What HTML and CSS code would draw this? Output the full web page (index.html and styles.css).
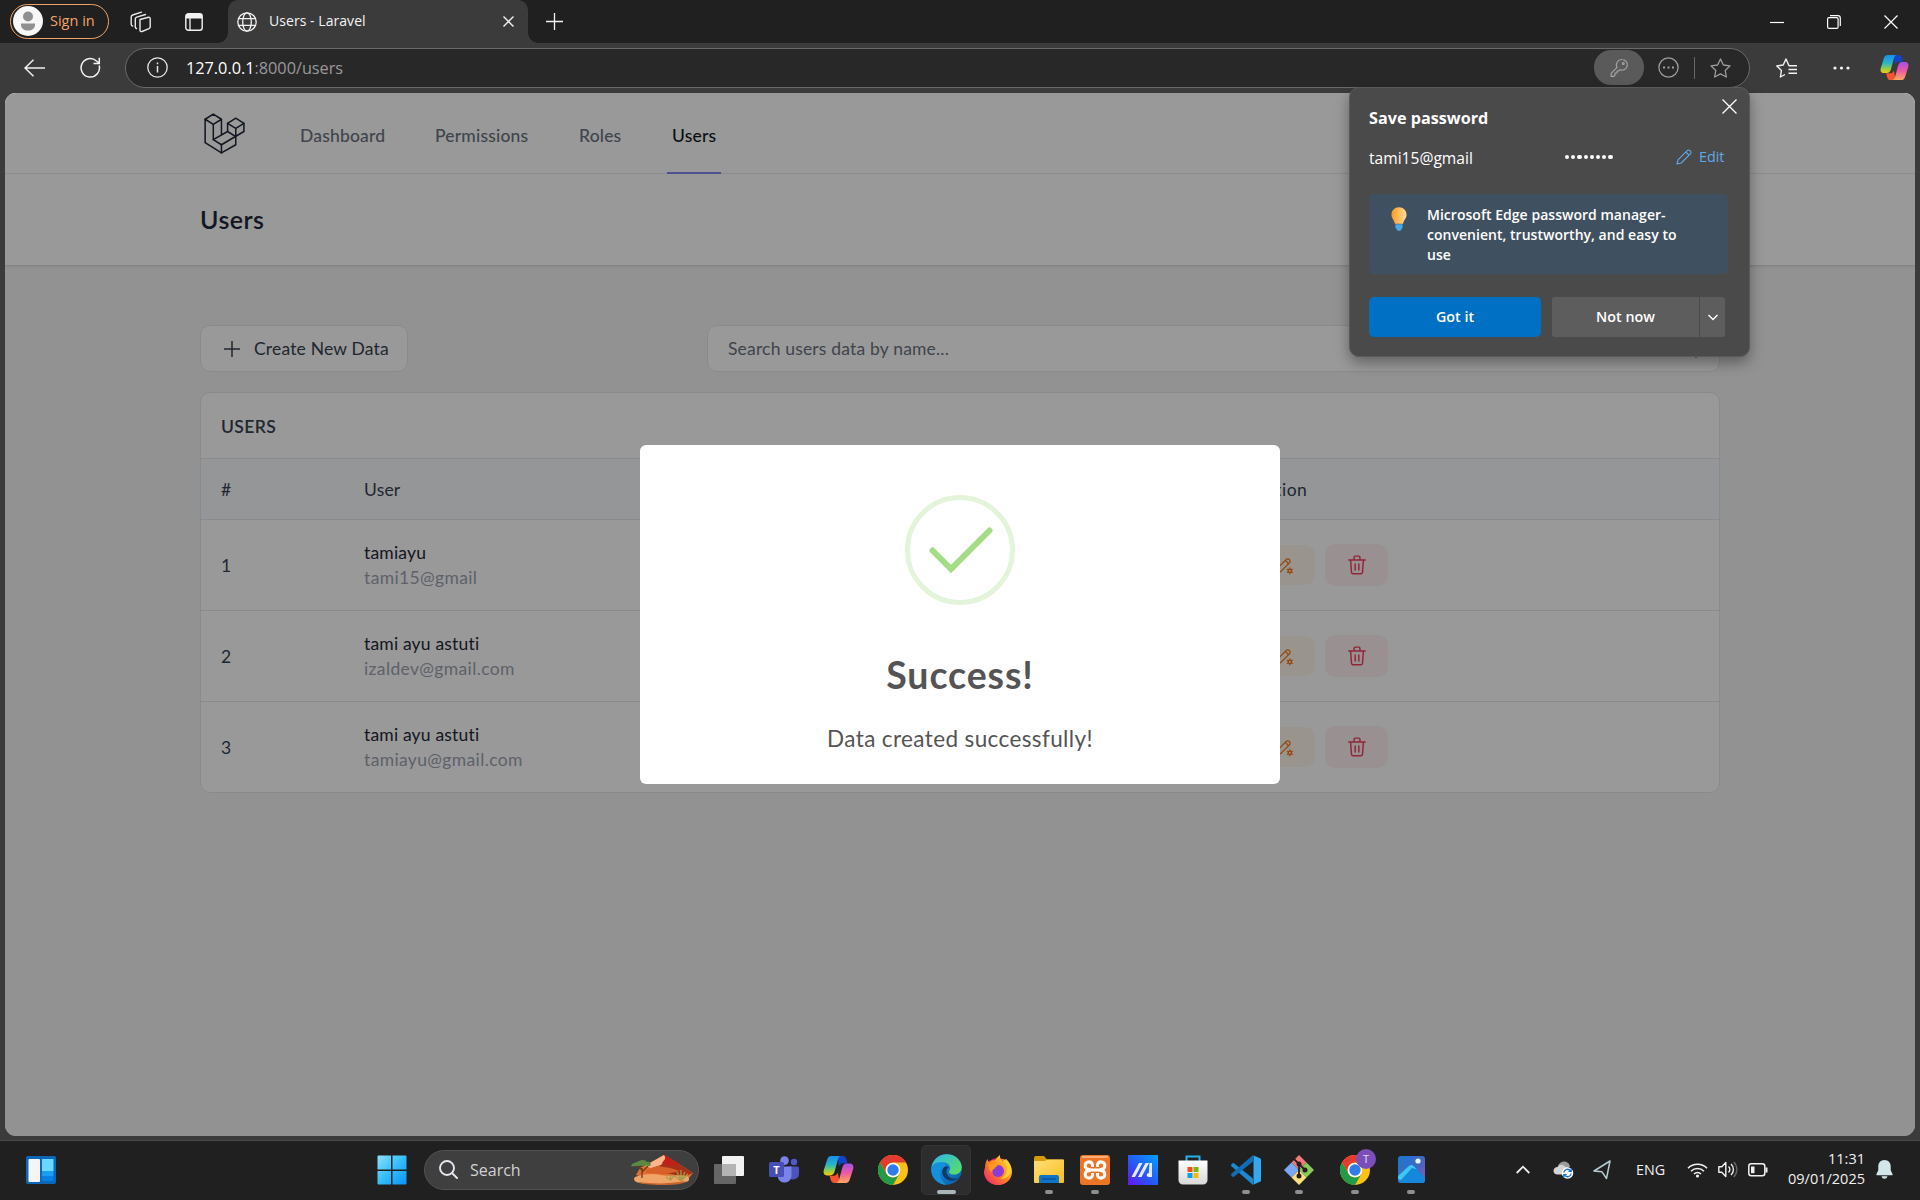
FILE: index.html
```html
<!DOCTYPE html>
<html lang="en">
<head>
<meta charset="utf-8">
<title>Users - Laravel</title>
<link rel="stylesheet" href="styles.css">
</head>
<body>
<svg class="defs" width="0" height="0" aria-hidden="true">
  <defs>
    <linearGradient id="cp1" x1="0" y1="0" x2="0" y2="1"><stop offset="0" stop-color="#1a8fe8"/><stop offset=".45" stop-color="#28b6c8"/><stop offset=".75" stop-color="#8fcf4a"/><stop offset="1" stop-color="#ffc800"/></linearGradient>
    <linearGradient id="cp2" x1="0" y1="0" x2="0" y2="1"><stop offset="0" stop-color="#a84fe8"/><stop offset=".5" stop-color="#ee5aa0"/><stop offset="1" stop-color="#ffa860"/></linearGradient>
    <linearGradient id="win" x1="0" y1="0" x2="1" y2="1"><stop offset="0" stop-color="#8be2ff"/><stop offset=".5" stop-color="#35bdfb"/><stop offset="1" stop-color="#0b92f8"/></linearGradient>
    <linearGradient id="edgeA" x1="0" y1="0" x2="1" y2="1"><stop offset="0" stop-color="#2cb6ea"/><stop offset="1" stop-color="#5fe05a"/></linearGradient>
    <linearGradient id="edgeB" x1="0" y1="0" x2="1" y2="1"><stop offset="0" stop-color="#1ba0e8"/><stop offset="1" stop-color="#0c59a4"/></linearGradient>
    <linearGradient id="ff" x1="1" y1="0" x2="0" y2="1"><stop offset="0" stop-color="#fff04a"/><stop offset=".5" stop-color="#ff8a1e"/><stop offset="1" stop-color="#f0147a"/></linearGradient>
    <linearGradient id="fold" x1="0" y1="0" x2="1" y2="1"><stop offset="0" stop-color="#ffe07a"/><stop offset="1" stop-color="#fbbc1d"/></linearGradient>
    <linearGradient id="asus" x1="1" y1="0" x2="0" y2="1"><stop offset="0" stop-color="#00a2ff"/><stop offset=".6" stop-color="#2c50f5"/><stop offset="1" stop-color="#6a12f4"/></linearGradient>
    <linearGradient id="photo" x1="0" y1="0" x2="1" y2="1"><stop offset="0" stop-color="#1479d6"/><stop offset=".6" stop-color="#4a64c0"/><stop offset="1" stop-color="#9a5aae"/></linearGradient>
    <linearGradient id="bulb" x1="0" y1="0" x2="1" y2="0"><stop offset="0" stop-color="#ff9a1a"/><stop offset="1" stop-color="#ffe0a0"/></linearGradient>
    <linearGradient id="bag" x1="0" y1="0" x2="0" y2="1"><stop offset="0" stop-color="#fff"/><stop offset="1" stop-color="#d8d8d8"/></linearGradient>
    <symbol id="copilot" viewBox="0 0 30 28">
      <path d="M12 1h7c2 0 3 1 3.600 3l1 4h-4c-2 0-3.300 1-4 3l-1-6z" fill="#1642c8"/>
      <path d="M18 27h-7c-2 0-3-1-3.600-3l-1-4h4c2 0 3.300-1 4-3l1 6z" fill="#f4552e"/>
      <path d="M8 1h9c-1.500.6-2.200 2-2.700 3.800l-3 11c-.7 2.500-2 4-4.300 4H4C1.200 19.800 0 17.500.8 14.500L4 4.500C4.800 2 6 1 8 1z" fill="url(#cp1)"/>
      <path d="M22 27h-9c1.500-.6 2.200-2 2.700-3.800l3-11c.7-2.500 2-4 4.300-4h3c2.800 0 4 2.300 3.200 5.300L26 23.500C25.200 26 24 27 22 27z" fill="url(#cp2)"/>
    </symbol>
    <symbol id="chrome" viewBox="0 0 30 30">
      <circle cx="15" cy="15" r="15" fill="#fbc116"/>
      <path d="M2 7.500A15 15 0 0 1 28 7.500H15a7.500 7.500 0 0 0-6.500 11.200z" fill="#e33b2e"/>
      <path d="M2 7.500A15 15 0 0 0 15 30l6.500-11.200a7.500 7.500 0 0 1-13 0z" fill="#229a48"/>
      <circle cx="15" cy="15" r="7.300" fill="#fff"/><circle cx="15" cy="15" r="5.700" fill="#2f7bea"/>
    </symbol>
    <symbol id="pencog" viewBox="0 0 24 24">
      <g fill="none" stroke="currentColor" stroke-width="1.500" stroke-linecap="round" stroke-linejoin="round"><path d="M4 20h4L18.500 9.500a2.828 2.828 0 1 0-4-4L4 16v4M13.500 6.500l4 4"/><circle cx="19" cy="19" r="2"/><path d="M19 15.500V17M19 21v1.500M22 17.200l-1.300.8M17.300 20l-1.300.8M16 17.200l1.300.8M20.700 20l1.300.8"/></g>
    </symbol>
    <symbol id="trash" viewBox="0 0 24 24">
      <g fill="none" stroke="currentColor" stroke-width="1.600" stroke-linecap="round" stroke-linejoin="round"><path d="M3 6.500h18M5 6.500l1 13.500a1.500 1.500 0 0 0 1.500 1.500h9A1.500 1.500 0 0 0 18 20l1-13.500M8.800 6V3.500A1.200 1.200 0 0 1 10 2.300h4a1.200 1.200 0 0 1 1.200 1.200V6M10 11v6.500M14 11v6.500"/></g>
    </symbol>
  </defs>
</svg>

<div class="browser">
  <header class="titlebar">
    <div class="signin"><svg width="30" height="30" viewBox="0 0 30 30"><circle cx="15" cy="15" r="15" fill="#f7f7f7"/><circle cx="15" cy="10.500" r="5" fill="#909090"/><path d="M8 17.500h14v1.500c0 3.500-3 5.500-7 5.500s-7-2-7-5.500z" fill="#909090"/></svg><span>Sign in</span></div>
    <svg class="ico-spaces" width="22" height="22" viewBox="0 0 22 22" fill="none" stroke="#e8e8e8" stroke-width="1.400" stroke-linejoin="round" stroke-linecap="round"><path d="M10 8.500l8.500-2.200c1-.2 1.700.3 1.700 1.200v8.500c0 .8-.4 1.300-1.200 1.700L12 20.500c-1 .3-2-.2-2-1.200z"/><path d="M6.500 17.500C5.700 17.300 5.300 16.700 5.300 16V8c0-1 .5-1.600 1.400-1.900L15.500 3.500"/><path d="M2.600 15C1.700 14.700 1.200 14 1.200 13.200V6c0-1 .5-1.700 1.400-2L11.500 1.200"/></svg>
    <svg class="ico-tabs" width="18" height="18" viewBox="0 0 18 18"><rect x=".8" y=".8" width="16.400" height="16.400" rx="2.500" fill="none" stroke="#f2f2f2" stroke-width="1.400"/><path d="M1 1h16v4.500H1z" fill="#f2f2f2"/><path d="M5 5v12" stroke="#f2f2f2" stroke-width="1.300"/></svg>
    <div class="tab">
      <svg width="20" height="20" viewBox="0 0 20 20" fill="none" stroke="#f2f2f2" stroke-width="1.300"><circle cx="10" cy="10" r="9.200"/><ellipse cx="10" cy="10" rx="4.300" ry="9.200"/><path d="M1.600 6.700h16.800M1.600 13.300h16.800"/></svg>
      <span class="tab-title">Users - Laravel</span>
      <svg width="11" height="11" viewBox="0 0 11 11" stroke="#f2f2f2" stroke-width="1.400"><path d="M.5.5l10 10M10.500.5l-10 10"/></svg>
    </div>
    <svg class="ico-newtab" width="17" height="17" viewBox="0 0 17 17" stroke="#f2f2f2" stroke-width="1.300"><path d="M8.500 0v17M0 8.500h17"/></svg>
    <div class="winctl">
      <svg width="14" height="14" viewBox="0 0 14 14" stroke="#fff" stroke-width="1.200"><path d="M0 7.500h14"/></svg>
      <svg width="14" height="14" viewBox="0 0 14 14" fill="none" stroke="#fff" stroke-width="1.200"><rect x=".6" y="2.600" width="10.500" height="10.800" rx="1.500"/><path d="M3 .7h8c1.300 0 2.300 1 2.300 2.300V11"/></svg>
      <svg width="14" height="14" viewBox="0 0 14 14" stroke="#fff" stroke-width="1.200"><path d="M.5.5l13 13M13.500.5l-13 13"/></svg>
    </div>
  </header>

  <div class="toolbar">
    <svg class="ico-back" width="21" height="18" viewBox="0 0 21 18" fill="none" stroke="#f2f2f2" stroke-width="1.500"><path d="M21 9H1M9.500.8L1 9l8.500 8.200"/></svg>
    <svg class="ico-reload" width="21" height="21" viewBox="0 0 21 21" fill="none" stroke="#f2f2f2" stroke-width="1.500"><path d="M19.200 8.500A9.200 9.200 0 1 1 16.500 4l2.500 2M19.300.8v5.700h-5.800"/></svg>
    <div class="address">
      <svg width="21" height="21" viewBox="0 0 21 21" fill="none" stroke="#e8e8e8" stroke-width="1.300"><circle cx="10.500" cy="10.500" r="9.700"/><path d="M10.500 9v6.500M10.500 5.500v1.700" stroke-width="1.500"/></svg>
      <span class="url"><b>127.0.0.1</b>:8000/users</span>
      <span class="keypill"><svg width="20" height="20" viewBox="0 0 20 20" fill="none" stroke="#a4a4a4" stroke-width="1.200" stroke-linejoin="round"><path d="M13 1.500a5.300 5.300 0 1 1-2 10.200L9.700 13H8v2H6v2l-1.300 1.400H2.200v-3l5.900-6A5.300 5.300 0 0 1 13 1.500z"/><circle cx="14.300" cy="5.600" r=".9"/></svg></span>
      <svg class="ico-more" width="21" height="21" viewBox="0 0 21 21" fill="none" stroke="#9d9d9d" stroke-width="1.300"><circle cx="10.500" cy="10.500" r="9.600"/><path d="M5 10.500h2M9.500 10.500h2M14 10.500h2" stroke-width="2"/></svg>
      <i class="sep"></i>
      <svg width="21" height="20" viewBox="0 0 21 20" fill="none" stroke="#9d9d9d" stroke-width="1.300" stroke-linejoin="round"><path d="M10.500 1l2.900 6 6.600.9-4.800 4.600 1.200 6.500-5.900-3.100L4.600 19l1.200-6.500L1 7.900 7.600 7z"/></svg>
    </div>
    <svg class="ico-fav" width="21" height="20" viewBox="0 0 21 20" fill="none" stroke="#f2f2f2" stroke-width="1.400" stroke-linejoin="round"><path d="M21 7.700h-8L10 1 7.200 7 .8 7.900l4.600 4.600-1 6.500L9 16.500M12.500 11.500H21M12.500 15.300H21"/></svg>
    <svg class="ico-dots" width="17" height="4" viewBox="0 0 17 4" fill="#f2f2f2"><circle cx="2" cy="2" r="1.600"/><circle cx="8.500" cy="2" r="1.600"/><circle cx="15" cy="2" r="1.600"/></svg>
    <svg class="ico-cp" width="29" height="29"><use href="#copilot"/></svg>
  </div>

  <div class="viewport">
    <nav class="nav">
      <svg class="logo" width="49" height="49" viewBox="0 0 24 24" fill="none" stroke="#1f2937" stroke-width=".75" stroke-linejoin="round" stroke-linecap="round"><path d="M3 17l8 5 7-4v-8l-4-2.500L18 5l4 2.500v4L11 18l-4-2.500V8L3 5.500z"/><path d="M11 18v4M7 15.500l7-4M14 7.500v4M14 11.500l4 2.500M11 13V5.500L7 3 3 5.500M7 8l4-2.500M18 10l4-2.500"/></svg>
      <a class="n1">Dashboard</a><a class="n2">Permissions</a><a class="n3">Roles</a><a class="n4 active">Users</a>
    </nav>
    <div class="pagehead"><h2>Users</h2></div>
    <main>
      <div class="actions">
        <div class="create"><svg width="16" height="16" viewBox="0 0 16 16" stroke="#374151" stroke-width="1.500"><path d="M8 0v16M0 8h16"/></svg><span>Create New Data</span></div>
        <div class="search"><span>Search users data by name...</span><svg width="18" height="18" viewBox="0 0 18 18" fill="none" stroke="#374151" stroke-width="1.500" stroke-linecap="round"><circle cx="7.500" cy="7.500" r="6.500"/><path d="M12.500 12.500L17 17"/></svg></div>
      </div>
      <section class="card">
        <h3>USERS</h3>
        <div class="row head"><span>#</span><span>User</span><span class="act">Action</span></div>
        <div class="row"><span class="num">1</span><div class="who"><p>tamiayu</p><p class="mail">tami15@gmail</p></div><div class="btns"><i class="edit"><svg width="20" height="20"><use href="#pencog"/></svg></i><i class="del"><svg width="22" height="22"><use href="#trash"/></svg></i></div></div>
        <div class="row"><span class="num">2</span><div class="who"><p>tami ayu astuti</p><p class="mail">izaldev@gmail.com</p></div><div class="btns"><i class="edit"><svg width="20" height="20"><use href="#pencog"/></svg></i><i class="del"><svg width="22" height="22"><use href="#trash"/></svg></i></div></div>
        <div class="row"><span class="num">3</span><div class="who"><p>tami ayu astuti</p><p class="mail">tamiayu@gmail.com</p></div><div class="btns"><i class="edit"><svg width="20" height="20"><use href="#pencog"/></svg></i><i class="del"><svg width="22" height="22"><use href="#trash"/></svg></i></div></div>
      </section>
    </main>
    <div class="overlay">
      <div class="modal">
        <svg width="110" height="110" viewBox="0 0 110 110" fill="none"><circle cx="55" cy="55" r="52.500" stroke="#e4f4da" stroke-width="5"/><path d="M27.500 55.500L46 74l38.500-38.500" stroke="#a5dc86" stroke-width="6" stroke-linecap="round"/></svg>
        <h1>Success!</h1>
        <p>Data created successfully!</p>
      </div>
    </div>
  </div>

  <aside class="popup">
    <svg class="pclose" width="15" height="15" viewBox="0 0 15 15" stroke="#fff" stroke-width="1.300"><path d="M.5.5l14 14M14.500.5l-14 14"/></svg>
    <h4>Save password</h4>
    <div class="cred"><span class="acc">tami15@gmail</span><span class="pw"><i></i><i></i><i></i><i></i><i></i><i></i><i></i><i></i></span><svg width="16" height="16" viewBox="0 0 16 16" fill="none" stroke="#62a8e8" stroke-width="1.100" stroke-linejoin="round"><path d="M1 15l1-4.200L11.200 1.600a1.900 1.900 0 0 1 2.700 0l.5.500a1.900 1.900 0 0 1 0 2.700L5.200 14zM9.800 3l3.200 3.200"/></svg><span class="editlink">Edit</span></div>
    <div class="tip"><svg width="16" height="25" viewBox="0 0 17 26"><path d="M8.500 0C3.800 0 .5 3.400.5 8c0 4 3 5.700 3.700 9.500h8.600C13.500 13.700 16.500 12 16.500 8c0-4.600-3.300-8-8-8z" fill="url(#bulb)"/><path d="M4.700 18h7.600v3.500L10 25H7l-2.300-3.500z" fill="#4aa8e8"/></svg><p>Microsoft Edge password manager-<br>convenient, trustworthy, and easy to<br>use</p></div>
    <div class="pbtns"><span class="got">Got it</span><span class="not">Not now</span><span class="drop"><svg width="10" height="7" viewBox="0 0 10 7" fill="none" stroke="#fff" stroke-width="1.400"><path d="M.5 1L5 5.500 9.500 1"/></svg></span></div>
  </aside>
</div>

<footer class="taskbar">
  <svg class="widgets" width="30" height="28" viewBox="0 0 30 28"><rect width="30" height="28" rx="2" fill="#0d67b8"/><rect x="2.500" y="3" width="11.500" height="23" rx="1" fill="#f5f5f5"/><path d="M16 3h11.500v12H16z" fill="#69d7ff"/><path d="M16 15h11.500v5.500H16z" fill="#1b9df5"/><path d="M16 20.500h11.500V25H16z" fill="#0580ea"/></svg>
  <svg class="start" width="30" height="30" viewBox="0 0 30 30" fill="url(#win)"><path d="M1.500.5H14v14H.5v-13a1 1 0 0 1 1-1zM15.500.5h13a1 1 0 0 1 1 1v13h-14zM.5 16H14v13.500H1.500a1 1 0 0 1-1-1zM15.500 16h14v12.500a1 1 0 0 1-1 1h-13z"/></svg>
  <div class="tsearch"><svg width="19" height="19" viewBox="0 0 19 19" fill="none" stroke="#e6e6ee" stroke-width="1.900" stroke-linecap="round"><circle cx="8" cy="8" r="7"/><path d="M13 13l5 5"/></svg><span>Search</span>
    <svg class="desert" width="64" height="31" viewBox="0 0 64 31"><path d="M10 14L34 1l15 9 14 9-4 5-20 2-24-2-9-3z" fill="#e07030"/><path d="M34 1l15 9 14 9-9 4-14-3-24-2 12-7z" fill="#a83016"/><path d="M34 1l2 4-5 6-10 3-6-2z" fill="#ffb48c"/><path d="M35 1l15 9-10 2-8-3 3-4z" fill="#c0201c"/><path d="M16 16l12-4 12 2 10 3-14 3-20-1z" fill="#d8602a"/><path d="M5 23c8-3 18-4 26-2s19-1 26 1c3 2 3 5-1 6-8 2-38 3-46 1-6-1-7-4-5-6z" fill="#f0a468"/><path d="M8 28c16 2 30 2 48-1-2 3-10 4-23 4S11 30 8 28z" fill="#c8642c"/><path d="M12 24V14M12 18l6-6M12 16L6 11" stroke="#6a3a14" stroke-width="1.300" fill="none"/><path d="M1 12c2-4 5-3 8-5 3-2 7-1 8 1 3-1 5 2 3 4-3 0-4-1-7 0-4-1-8 1-12 0z" fill="#5c8a3c"/><path d="M51 27l-8-6M51 27l-4-9M51 27V16M51 27l4-9M51 27l7-7M41 26l-5-3M41 26l-1-6M41 26l3-5" stroke="#a89a48" stroke-width="1.300"/></svg>
  </div>
  <svg class="a1" width="30" height="28" viewBox="0 0 30 28"><rect x="8" y="0" width="22" height="20" rx="1" fill="#f2f2f2"/><rect x="0" y="8" width="22" height="20" rx="1" fill="#666"/><path d="M8 8h14v12H8z" fill="#b4b4b4"/></svg>
  <svg class="a2" width="30" height="28" viewBox="0 0 30 28"><circle cx="25" cy="6" r="3.200" fill="#5059c9"/><path d="M20 10.500h8.500a1.500 1.500 0 0 1 1.500 1.500v6a6 6 0 0 1-10 4z" fill="#4b53bc"/><circle cx="15.500" cy="4.600" r="4.300" fill="#7b83eb"/><path d="M9 10.500h13.500V20a7 7 0 0 1-13.500 2z" fill="#7b83eb"/><rect y="6" width="15" height="15" rx="1.500" fill="#464eb8"/><text x="7.500" y="17.500" text-anchor="middle" class="tletter">T</text></svg>
  <svg class="a3" width="31" height="29"><use href="#copilot"/></svg>
  <svg class="a4" width="30" height="30"><use href="#chrome"/></svg>
  <div class="tile"><svg width="31" height="31" viewBox="0 0 31 31"><circle cx="15.500" cy="15.500" r="15.300" fill="url(#edgeB)"/><path d="M.5 13.500C2 5 8.500.2 15.700.2 24.500.2 30.800 6.500 30.800 13.200c0 4.500-3.600 7.300-7.500 7.300-3.500 0-5.300-1.300-5.300-2.600 0-.9 1.200-1.200 1.200-3.600 0-3.200-3-6-7.300-6C6.500 8.300 2 11 .5 13.500z" fill="url(#edgeA)"/><path d="M15 12c-3 1.500-4.500 4.500-3.500 8 1.200 4.500 6 7.500 11 6.500 2.500-.5 4.500-1.700 6-3.200-2 1.400-5 1.700-7.500 1-4-1.200-6-4.500-5.400-8 .3-1.500 1.400-2.500 2.200-3z" fill="#123a68"/><path d="M.3 15c.5-4 4-6.800 8.500-6.500 3 .2 5 1.500 6.200 3.300-4 1.200-6.800 5-5.700 10 .8 3.800 3 7 6.200 8.900C7 30.700.2 24 .3 15z" fill="#168fdc"/></svg></div>
  <svg class="a6" width="30" height="30" viewBox="0 0 30 30"><circle cx="15" cy="16.500" r="13.500" fill="#e8206a"/><path d="M2 13C2 9 3 6 4.500 4c.5 2 1 2.500 1.500 3C8 5.500 10 5 12 5.500c1-2.500 3-4 5-5.500-.5 3 1 5 3 6l3-2c3 2.500 6 7 6 13 0 7-6 13-14 13S1 24 1 17z" fill="url(#ff)"/><circle cx="15" cy="16" r="6" fill="#8e3ad8"/><path d="M6 9c4-1.500 7 0 9 2-2 .5-3 1-3 2.500C10 14 9 15 9.500 17.500 6.500 16 5 13 6 9z" fill="#ff9a1e"/><path d="M18 4c6 3 7 9 5 14-1 3-3 4.500-6 5.500 7 1 11-4 11-9C27 8 23 4 18 4z" fill="#ffd030"/></svg>
  <div class="run a7"><svg width="30" height="27" viewBox="0 0 30 27"><path d="M0 2a2 2 0 0 1 2-2h8l3 3.500h16a1 1 0 0 1 1 1V8H0z" fill="#d69a0c"/><path d="M0 5h11l2-1.500h16a1 1 0 0 1 1 1V26a1 1 0 0 1-1 1H1a1 1 0 0 1-1-1z" fill="url(#fold)"/><path d="M5 21a2 2 0 0 1 2-2h16a2 2 0 0 1 2 2v6H5z" fill="#0e74c8"/><path d="M8 23h14" stroke="#064e90" stroke-width="1.200"/></svg></div>
  <div class="run a8"><svg width="30" height="30" viewBox="0 0 30 30"><rect width="30" height="30" rx="3" fill="#ee7426"/><path d="M2 1h26v2H2z" fill="#ffc89a" opacity=".7"/><path d="M10.500 15h9M12.500 9.800a3.700 3.700 0 1 0-3.700 4.500c1.200 0 1.200 1.400 0 1.400a3.700 3.700 0 1 0 3.700 4.500M17.500 9.800a3.700 3.700 0 1 1 3.700 4.500c-1.200 0-1.200 1.400 0 1.400a3.700 3.700 0 1 1-3.700 4.500M12.500 9.500V12M17.500 9.500V12M12.500 20.500V18M17.500 20.500V18" fill="none" stroke="#fff" stroke-width="3"/></svg></div>
  <svg class="a9" width="30" height="30" viewBox="0 0 30 30"><rect width="30" height="30" fill="url(#asus)"/><path d="M3.500 22L11 8h3.500L7 22zM10 22l7.500-14H21l-7.500 14zM21.500 8H24v14h-3.500z" fill="#e6ecff"/><circle cx="20.500" cy="20" r="1.800" fill="#fff"/></svg>
  <svg class="a10" width="30" height="30" viewBox="0 0 30 30"><path d="M8.500 6V1.500h13V6" fill="none" stroke="#28b0ee" stroke-width="2"/><path d="M.5 5.500h29V25a4.500 4.500 0 0 1-4.500 4.500H5A4.500 4.500 0 0 1 .5 25z" fill="url(#bag)"/><path d="M9.500 12h5v5h-5z" fill="#f04e1e"/><path d="M15.500 12h5v5h-5z" fill="#7cb80a"/><path d="M9.500 18h5v5h-5z" fill="#00a2ea"/><path d="M15.500 18h5v5h-5z" fill="#fdb70a"/></svg>
  <div class="run a11"><svg width="30" height="30" viewBox="0 0 30 30"><path d="M2.300 7.800L22 23.500V30L.5 11.300c-.7-.7-.6-1.300 0-2z" fill="#1b8ad6"/><path d="M2.300 22.200L22 6.500V0L.5 18.700c-.7.700-.6 1.300 0 2z" fill="#0e6fb8"/><path d="M21.500 0L29 3.200c.6.300 1 .8 1 1.400v20.800c0 .6-.4 1.100-1 1.400L21.500 30c1-.3 1-1 1-2V2c0-1 0-1.700-1-2z" fill="#33a8ee"/></svg></div>
  <div class="run a12"><svg width="30" height="30" viewBox="0 0 30 30"><path d="M15 0l7.500 7.500L15 15 7.500 7.500z" fill="#f07a7a"/><path d="M22.500 7.500L30 15l-7.500 7.500L15 15z" fill="#86cc5c"/><path d="M7.500 7.500L15 15l-7.500 7.500L0 15z" fill="#78a8f4"/><path d="M15 15l7.500 7.500L15 30l-7.500-7.500z" fill="#fae07e"/><path d="M10 4l5 5v12M15 9l6 6" stroke="#2a1c1c" stroke-width="1.800" fill="none"/><circle cx="15" cy="9" r="2.500" fill="#2a1c1c"/><circle cx="21" cy="15" r="2.500" fill="#2a1c1c"/><circle cx="15" cy="21" r="2.500" fill="#2a1c1c"/></svg></div>
  <div class="run a13"><svg width="30" height="30"><use href="#chrome"/></svg><b class="badge">T</b></div>
  <div class="run a14"><svg width="27" height="27" viewBox="0 0 27 27"><rect width="27" height="27" rx="3" fill="url(#photo)"/><path d="M0 20L11 10c1.500-1.300 3-1.300 4.500 0L27 21v3a3 3 0 0 1-3 3H3a3 3 0 0 1-3-3z" fill="#1687dc"/><path d="M0 20L11 10c1.500-1.300 3-1.300 4.500 0l3.500 3.300-5-1.300L3 24l-3-1z" fill="#3cc8f4"/><circle cx="20" cy="5" r="2.600" fill="#e8f4ff"/></svg></div>
  <div class="tray">
    <svg width="14" height="9" viewBox="0 0 14 9" fill="none" stroke="#f0f0f0" stroke-width="1.800"><path d="M.7 8L7 1.700 13.300 8"/></svg>
    <svg class="t2" width="21" height="18" viewBox="0 0 21 18"><path d="M5 5C6 2 8.500.5 11 .5c3.500 0 5.500 2.500 6 5l-5 4z" fill="#9a9a9a"/><path d="M4.500 13.500C2 13.500.5 12 .5 9.800.5 7.500 2.500 6 4.500 6c1-1.500 3-2.500 5-2l6 3.500c2 .5 3 2 3 3.500s-1 2.500-2.500 2.500z" fill="#d4d4d4"/><circle cx="14.500" cy="12" r="5.800" fill="#fff"/><path d="M10.800 11.500a3.800 3.800 0 0 1 6.800-1.700M18.200 7.500v2.800h-2.800M18.200 12.500a3.800 3.800 0 0 1-6.800 1.700M10.800 16.500v-2.800h2.800" fill="none" stroke="#1473cc" stroke-width="1.300"/></svg>
    <svg class="t3" width="18" height="20" viewBox="0 0 18 20" fill="none" stroke="#b4ccd2" stroke-width="1.500" stroke-linejoin="round"><path d="M17 1L1 11l8 .8 4.500 6.700z"/></svg>
    <span class="eng">ENG</span>
    <svg class="t5" width="21" height="16" viewBox="0 0 21 16" fill="none" stroke="#f0f0f0" stroke-width="1.600"><path d="M1 6.200a13.500 13.500 0 0 1 19 0M4 9.200a9.200 9.200 0 0 1 13 0M7 12a5 5 0 0 1 7 0"/><circle cx="10.500" cy="14" r="1.600" fill="#f0f0f0" stroke="none"/></svg>
    <svg class="t6" width="20" height="17" viewBox="0 0 20 17" fill="none" stroke="#f0f0f0" stroke-width="1.400"><path d="M.8 5.800h3l4-4.300v14l-4-4.300h-3z" stroke-linejoin="round"/><path d="M10.500 5.500a4 4 0 0 1 0 6M13 3a7.500 7.500 0 0 1 0 11"/><path d="M15.700 1a10.500 10.500 0 0 1 0 15" stroke="#666"/></svg>
    <svg class="t7" width="20" height="14" viewBox="0 0 20 14" fill="none" stroke="#f0f0f0" stroke-width="1.500"><rect x=".8" y=".8" width="16" height="12" rx="2.500"/><path d="M18.500 4.500v5" stroke-width="2"/><path d="M3 3.500h3.500v6.700H3z" fill="#f0f0f0" stroke="none"/></svg>
    <div class="clock"><span>11:31</span><span>09/01/2025</span></div>
    <svg class="bell" width="17" height="19" viewBox="0 0 17 19" fill="#d3e7ea"><path d="M8.500 0C4.800 0 2.300 2.800 2.300 6.300v4L.4 14.200c-.2.600.1 1 .7 1h14.800c.6 0 .9-.4.7-1l-1.900-3.900v-4C14.700 2.800 12.200 0 8.500 0zM5.500 16.300h6c-.5 1.700-1.600 2.500-3 2.500s-2.500-.8-3-2.500z"/></svg>
  </div>
</footer>
</body>
</html>
```
FILE: styles.css
```css
* { box-sizing: border-box; margin: 0; padding: 0; }
body { width: 1920px; height: 1200px; overflow: hidden; background: #202020; font-family: "Open Sans", "Noto Sans", sans-serif; display: flex; flex-direction: column; }
svg { display: block; flex: none; }
.defs { position: absolute; }
i { font-style: normal; }
h1, h2, h3, h4 { font-weight: 600; }

/* Browser chrome */
.browser { position: relative; height: 1141px; background: #3b3b3b; display: flex; flex-direction: column; border-bottom: 1px solid #4a4a4a; }
.titlebar { height: 43px; flex: none; background: #202020; display: flex; align-items: center; padding-left: 10px; }
.signin { width: 99px; height: 35px; margin-top: -1px; border: 1.500px solid #f0a468; border-radius: 18px; display: flex; align-items: center; gap: 7px; padding-left: 2px; font-size: 14.500px; color: #f0a468; }
.signin span { margin-top: -2px; }
.ico-spaces { margin-left: 21px; }
.ico-tabs { margin-left: 33px; }
.tab { position: relative; align-self: stretch; width: 300px; margin-left: 25px; background: #3b3b3b; border-radius: 10px 10px 0 0; display: flex; align-items: center; padding: 0 14px 0 9px; color: #f4f4f4; }
.tab::before, .tab::after { content: ""; position: absolute; bottom: 0; width: 10px; height: 10px; background: radial-gradient(circle at 0 0, #202020 9.500px, #3b3b3b 10px); left: -10px; }
.tab::after { left: auto; right: -10px; background: radial-gradient(circle at 100% 0, #202020 9.500px, #3b3b3b 10px); }
.tab-title { flex: 1; margin-left: 12px; font-size: 14px; line-height: 20px; margin-top: -2px; letter-spacing: .05px; }
.ico-newtab { margin-left: 18px; margin-top: -1px; }
.winctl { margin-left: auto; display: flex; gap: 43px; padding-right: 22px; }
.toolbar { height: 50px; flex: none; display: flex; align-items: center; padding-left: 24px; padding-bottom: 1px; }
.ico-reload { margin-left: 35px; }
.address { width: 1625px; height: 40px; margin-left: 24px; border: 1px solid #6a6a6a; border-radius: 20px; background: #282828; display: flex; align-items: center; padding: 0 18px 0 21px; }
.url { flex: 1; margin-left: 18px; font-size: 16.300px; color: #999; letter-spacing: -.02px; }
.url b { font-weight: 400; color: #fff; }
.keypill { width: 50px; height: 35px; margin-right: -1px; border-radius: 17px; background: #5a5a5a; display: flex; align-items: center; justify-content: center; }
.ico-more { margin-left: 15px; }
.sep { width: 1px; height: 22px; background: #666; margin: 0 15px 0 15px; }
.ico-fav { margin-left: 26px; }
.ico-dots { margin-left: 36px; }
.ico-cp { margin-left: 30px; }

/* Web page */
.viewport { position: relative; width: 1910px; height: 1043px; margin-left: 5px; border-radius: 11px; overflow: hidden; background: #f3f4f6; font-family: Lato, "Noto Sans", sans-serif; font-size: 17.500px; letter-spacing: .18px; color: #374151; display: flex; flex-direction: column; }
.nav { height: 81px; flex: none; background: #fff; border-bottom: 1px solid #f0f1f3; display: flex; padding-left: 194px; }
.logo { margin-top: 15px; }
.nav a { line-height: 85px; height: 81px; color: #6b7280; font-weight: 500; padding: 0 5px; }
.n1 { margin-left: 47px; width: 95px; }
.n2 { margin-left: 40px; width: 104px; }
.n3 { margin-left: 40px; width: 53px; }
.n4 { margin-left: 40px; width: 54px; }
.nav a.active { color: #111827; border-bottom: 2px solid #818cf8; }
.pagehead { height: 91px; flex: none; background: #fff; padding-left: 195px; box-shadow: 0 1px 3px rgba(0,0,0,.16); }
.pagehead h2 { font-size: 25px; line-height: 90px; letter-spacing: .45px; color: #1f2937; }
main { width: 1520px; margin: 60px 0 0 195px; display: flex; flex-direction: column; gap: 20px; }
.actions { display: flex; justify-content: space-between; }
.create, .search { height: 47px; background: #fff; border: 1px solid #e5e7eb; border-radius: 10px; display: flex; align-items: center; }
.create { width: 208px; padding-left: 23px; gap: 14px; }
.search { width: 1013px; padding: 0 22px 0 20px; color: #6b7280; justify-content: space-between; }
.card { height: 401px; background: #fff; border: 1px solid #e5e7eb; border-radius: 10px; overflow: hidden; }
.card h3 { height: 65px; padding-left: 20px; font-size: 17.500px; line-height: 67px; letter-spacing: .4px; }
.row { display: grid; grid-template-columns: 143px 888px 1fr; height: 91px; border-top: 1px solid #e5e7eb; align-items: center; }
.row > * { padding-left: 20px; }
.row.head { height: 61px; background: #f8fafc; }
.row .act { padding-left: 22px; letter-spacing: .55px; }
.who p { line-height: 25px; color: #1f2937; }
.who .mail { color: #9ca3af; letter-spacing: .36px; }
.btns { display: flex; gap: 10px; align-items: center; }
.btns i { width: 63px; height: 42px; border-radius: 10px; display: flex; align-items: center; justify-content: center; }
.edit { background: #fff7ed; color: #f97316; }
.btns .edit { height: 40px; }
.del { background: #fff1f2; color: #f43f5e; }
.overlay { position: absolute; inset: 0; background: rgba(0,0,0,.4); display: flex; align-items: center; justify-content: center; }
.modal { width: 640px; height: 339px; background: #fff; border-radius: 6px; display: flex; flex-direction: column; align-items: center; padding-top: 50px; color: #545454; }
.modal h1 { font-size: 37.500px; line-height: 46px; margin-top: 47px; font-weight: 700; letter-spacing: .9px; }
.modal p { font-size: 22.500px; line-height: 30px; margin-top: 26px; letter-spacing: .38px; }

/* Save password flyout */
.popup { position: absolute; left: 1349px; top: 87px; width: 401px; height: 270px; background: #4a4a4a; border: 1px solid #5a5a5a; border-radius: 10px; box-shadow: 0 6px 14px rgba(0,0,0,.35); padding: 19px 19px 0; color: #fff; }
.pclose { position: absolute; right: 12px; top: 11px; }
.popup h4 { font-size: 16.200px; line-height: 23px; font-weight: 700; }
.cred { display: flex; align-items: center; height: 22px; margin-top: 16px; }
.acc { width: 196px; margin-top: 2px; font-size: 15.600px; }
.pw { width: 111px; display: flex; gap: 2px; }
.pw i { width: 4.200px; height: 4.200px; border-radius: 50%; background: #fff; }
.editlink { margin-left: 7px; font-size: 14.300px; margin-top: -2px; color: #62a8e8; }
.tip { width: 359px; height: 80px; margin-top: 26px; border-radius: 5px; background: #3f5160; display: flex; padding: 11px 0 0 22px; font-size: 14px; font-weight: 600; line-height: 20px; letter-spacing: .03px; }
.tip svg { margin-top: 2px; }
.tip p { margin-left: 20px; }
.pbtns { display: flex; margin-top: 23px; height: 40px; font-size: 14.300px; font-weight: 600; line-height: 39px; text-align: center; }
.got { width: 172px; background: #0070c4; border-radius: 5px; }
.not { width: 147px; margin-left: 11px; background: #5d5d5d; border-radius: 3px 0 0 3px; }
.drop { width: 25px; margin-left: 1px; background: #5d5d5d; border-radius: 0 3px 3px 0; display: flex; align-items: center; justify-content: center; }

/* Taskbar */
.taskbar { flex: 1; display: flex; align-items: center; padding: 0 0 2px 26px; background: #202020; color: #f0f0f0; }
.start { margin-left: 321px; }
.tsearch { width: 275px; height: 40px; margin-left: 17px; border-radius: 20px; border: 1px solid #525252; background: #3f3f3f; display: flex; align-items: center; padding: 0 4px 0 14px; color: #d2d2d2; font-size: 16px; }
.tsearch span { flex: 1; margin-left: 12px; }
.a1 { margin-left: 15px; }
.a2 { margin-left: 25px; }
.tletter { font: 700 11px "Open Sans", sans-serif; fill: #fff; }
.a3 { margin-left: 24px; }
.a4 { margin-left: 24px; }
.tile { width: 50px; height: 50px; margin-left: 13px; border-radius: 5px; background: #2d2d2d; border: 1px solid #343434; display: flex; align-items: center; justify-content: center; position: relative; }
.tile::after { content: ""; position: absolute; bottom: 0; left: 15px; width: 19px; height: 4px; border-radius: 2px; background: #a8b6ba; }
.a6 { margin-left: 12px; }
.run { position: relative; width: 30px; height: 50px; display: flex; align-items: center; justify-content: center; }
.run::after { content: ""; position: absolute; bottom: 1px; left: 11px; width: 8px; height: 4px; border-radius: 2px; background: #8f8f8f; }
.a7 { margin-left: 21px; }
.a8 { margin-left: 16px; }
.a9 { margin-left: 18px; }
.a10 { margin-left: 20px; }
.a11 { margin-left: 23px; }
.a12 { margin-left: 23px; }
.a13 { margin-left: 26px; }
.a14 { margin-left: 26px; }
.badge { position: absolute; right: -6px; top: 4px; width: 20px; height: 20px; border-radius: 50%; background: #7a4fb8; font-size: 11px; line-height: 20px; text-align: center; color: #e8dcf4; font-weight: 400; }
.tray { flex: 1; display: flex; align-items: center; margin-left: 90px; padding-right: 27px; }
.t2 { margin-left: 23px; }
.t3 { margin-left: 19px; }
.eng { width: 30px; margin-left: 25px; font-size: 14.300px; }
.t5 { margin-left: 21px; }
.t6 { margin-left: 10px; }
.t7 { margin-left: 10px; }
.clock { flex: 1; display: flex; flex-direction: column; align-items: flex-end; font-size: 14.500px; line-height: 20px; padding-right: 11px; margin-top: -2px; }
```
